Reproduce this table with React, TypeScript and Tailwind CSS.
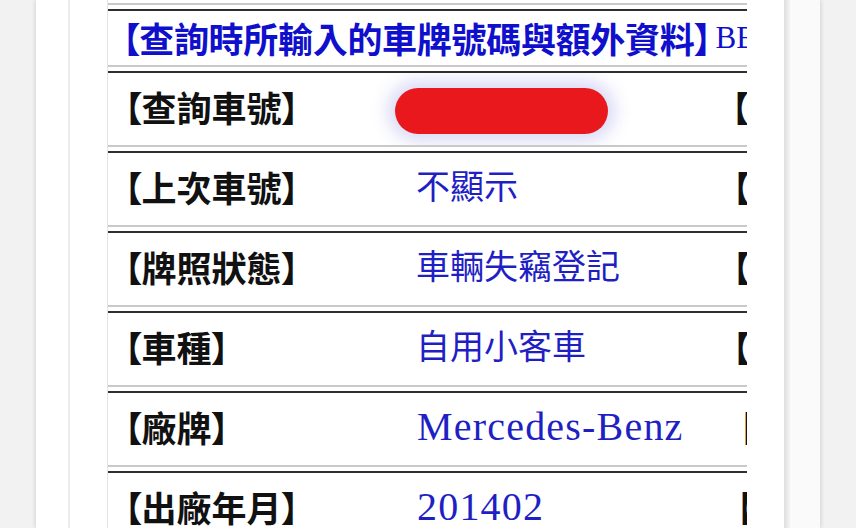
type Row = {
  label: string;
  kind: "blob" | "cjk" | "latin";
  value?: string;
  thirdPad: string;
};

const rows: Row[] = [
  { label: "【查詢車號】", kind: "blob", thirdPad: "pl-[2px]" },
  { label: "【上次車號】", kind: "cjk", value: "不顯示", thirdPad: "pl-[3px]" },
  { label: "【牌照狀態】", kind: "cjk", value: "車輛失竊登記", thirdPad: "pl-[3px]" },
  { label: "【車種】", kind: "cjk", value: "自用小客車", thirdPad: "pl-[3px]" },
  { label: "【廠牌】", kind: "latin", value: "Mercedes-Benz", thirdPad: "pl-[10px]" },
  { label: "【出廠年月】", kind: "latin", value: "201402", thirdPad: "pl-[7px]" },
];

const cjk = "font-['Noto_Sans_CJK_TC','Noto_Sans_CJK_SC',sans-serif] [font-feature-settings:'palt']";

const RecordRow = ({ row }: { row: Row }) => {
  return (
    <div className="flex h-[76px] shrink-0 items-center border-t-2 border-b-2 border-t-[#2e2e2e] border-b-[#c9c9c9] overflow-hidden">
      <div className={`w-[308px] shrink-0 pl-[16px] pb-[6px] text-[35px] font-bold leading-none text-[#111] ${cjk}`}>
        {row.label}
      </div>
      <div className="w-[313px] shrink-0 pb-[5px]">
        {row.kind === "blob" && (
          <div className="ml-[-21px] mt-[8px] h-[46px] w-[213px] rounded-full bg-[#e8181d] shadow-[0_0_16px_8px_rgba(140,140,230,0.3)]" />
        )}
        {row.kind === "cjk" && (
          <span className={`text-[34px] leading-none text-[#1f1fc4] ${cjk}`}>{row.value}</span>
        )}
        {row.kind === "latin" && (
          <span className="pl-[1px] font-['Liberation_Serif',serif] text-[40px] leading-none tracking-[1.2px] text-[#1f1fc4]">
            {row.value}
          </span>
        )}
      </div>
      <div className={`shrink-0 whitespace-nowrap pb-[6px] text-[35px] font-bold leading-none text-[#111] ${row.thirdPad} ${cjk}`}>
        【車身號碼】
      </div>
    </div>
  );
};

export default function App() {
  return (
    <div className="flex h-[528px] w-[856px] overflow-hidden bg-[#f2f2f2]">
      <div className="ml-[36px] flex w-[784px] shrink-0 bg-[#fafafa] shadow-[0_0_5px_rgba(0,0,0,0.18)]">
        <div className="w-[32px] shrink-0 bg-white" />
        <div className="flex w-[722px] shrink-0 border-l-2 border-[#ececec] bg-white">
          <div className="w-[37px] shrink-0" />
          <div className="flex w-[640px] shrink-0 flex-col gap-[4px] overflow-hidden border-l border-[#e4e4e4]">
            <div className="h-[5px] shrink-0 border-b-2 border-[#c9c9c9]" />
            <div className="flex h-[58px] shrink-0 items-center whitespace-nowrap border-t-2 border-b-2 border-t-[#2e2e2e] border-b-[#c9c9c9] pl-[14px] pb-[2px]">
              <span className={`text-[35px] font-bold leading-none tracking-[-0.3px] text-[#1010cc] ${cjk}`}>
                【查詢時所輸入的車牌號碼與額外資料】
              </span>
              <span className="ml-[4px] font-['Liberation_Serif',serif] text-[31px] leading-none text-[#1010cc]">
                BENZ
              </span>
            </div>
            {rows.map((row) => (
              <RecordRow key={row.label} row={row} />
            ))}
          </div>
          <div className="w-[37px] shrink-0 bg-white" />
          <div className="w-[6px] shrink-0 bg-gradient-to-r from-[#dedede] to-[#f4f4f4]" />
        </div>
      </div>
    </div>
  );
}
